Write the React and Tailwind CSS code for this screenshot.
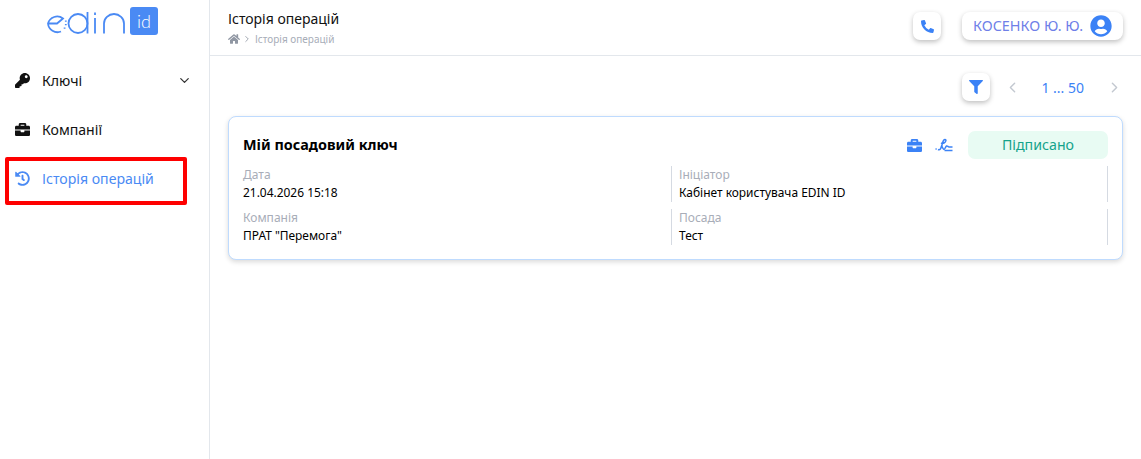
import { FaKey, FaBriefcase, FaHistory, FaHome, FaPhoneAlt, FaFilter, FaUserCircle } from 'react-icons/fa'
import { ChevronDown, ChevronLeft, ChevronRight } from 'lucide-react'

function Logo() {
  return (
    <div className="flex h-[35px] items-start pl-[46px] pt-[7px]">
      <svg width="80" height="24" viewBox="0 0 80 24" fill="none" stroke="#4a8af4" strokeWidth="1.800" className="mt-[4px]">
        <path d="M2 12.500 H11 L17 7.500 A9.500 9.500 0 0 0 2 12.500 A9.500 9.500 0 0 0 15 20.500" />
        <path d="M19.800 9.500v1.300M19.800 13v1.300M18.600 16.500v1.300" />
        <circle cx="32" cy="12.500" r="9.500" />
        <path d="M41.500 1v21.500" />
        <path d="M49 1.500v2.400M49 7v15.500" />
        <path d="M58 22.500V12.500a10 9.500 0 0 1 20 0V22.500" />
      </svg>
      <div className="ml-[4px] flex h-[28px] w-[28px] items-center justify-center rounded-[3px] bg-[#4a8af4] font-['Lato',sans-serif] text-[18px] font-light text-white">id</div>
    </div>
  )
}

function SignatureIcon() {
  return (
    <svg width="18" height="14" viewBox="0 0 18 14" fill="none" stroke="#3b82f6" strokeWidth="1.500" className="ml-[13px]">
      <path d="M0.500 11h1.200M3 11.500c2 1 3-1 4-4.500s1-5.500 3-5.500c1.600 0 1 2.500-1 3.500-1 .5-2 .5-3 0" />
      <path d="M6 7.500c1 .5 2 4 3 4s1.500-3 2.500-3.500 1.500 1 2.500 1h3.500" />
      <path d="M9.500 12.500h8" />
    </svg>
  )
}

function NavItem({ icon, label, active, chevron }) {
  return (
    <div className={`flex h-[49px] items-center pl-[15px] pr-[17px] text-[14.1px] ${active ? 'text-[#4a8af4]' : 'text-[#111]'}`}>
      <span className="flex w-[27px] text-[15px]">{icon}</span>
      <span className="flex-1">{label}</span>
      {chevron && <ChevronDown size={15} strokeWidth={2} className="text-[#333]" />}
    </div>
  )
}

function Field({ label, value, divider }) {
  return (
    <div className={`h-[36px] ${divider ? 'border-l border-r border-[#d5dae2] pl-[7px]' : ''}`}>
      <div className="text-[12px] leading-[17px] text-[#a8adb8]">{label}</div>
      <div className="text-[11.95px] leading-[19px] text-black">{value}</div>
    </div>
  )
}

export default function App() {
  return (
    <div className="flex h-[459px] w-[1141px] overflow-hidden bg-white font-['Noto_Sans',sans-serif]">
      <aside className="w-[210px] shrink-0 border-r border-[#e3e7ec]">
        <Logo />
        <nav className="mt-[21px]">
          <NavItem icon={<FaKey />} label="Ключі" chevron />
          <NavItem icon={<FaBriefcase />} label="Компанії" />
          <div className="relative">
            <NavItem icon={<FaHistory />} label="Історія операцій" active />
            <div className="absolute left-[5px] top-[3px] h-[48px] w-[182px] rounded-[2px] border-[4px] border-[#fe0000]" />
          </div>
        </nav>
      </aside>

      <main className="flex-1">
        <header className="flex h-[56px] items-center justify-between border-b border-[#e3e7ec] pl-[18px] pr-[18px]">
          <div className="-mt-[1px]">
            <div className="text-[14px] leading-[20px] text-[#111]">Історія операцій</div>
            <div className="mt-[4px] flex items-center text-[10px] leading-[13px] text-[#a8adb8]">
              <FaHome size={12} className="text-[#9097a3]" />
              <ChevronRight size={10} className="ml-[2px] mr-[3px] text-[#9097a3]" />
              <span>Історія операцій</span>
            </div>
          </div>
          <div className="mb-[3px] flex items-center gap-[21px]">
            <button className="flex h-[28px] w-[28px] items-center justify-center rounded-[7px] bg-white text-[#3b82f6] shadow-[0_2px_5px_rgba(0,0,0,0.25)]">
              <FaPhoneAlt size={13} />
            </button>
            <div className="flex h-[28px] w-[161px] items-center justify-between rounded-[8px] bg-white pl-[11px] pr-[11px] text-[14.4px] text-[#6f7fe8] shadow-[0_2px_5px_rgba(0,0,0,0.25)]">
              <span>КОСЕНКО Ю. Ю.</span>
              <FaUserCircle size={22} className="text-[#3b82f6]" />
            </div>
          </div>
        </header>

        <div className="pl-[18px] pr-[18px]">
          <div className="flex h-[60px] items-center justify-end pt-[2px]">
            <button className="mr-[14px] flex h-[28px] w-[28px] items-center justify-center rounded-[7px] bg-white text-[#3b82f6] shadow-[0_2px_5px_rgba(0,0,0,0.25)]">
              <FaFilter size={14} />
            </button>
            <ChevronLeft size={17} className="text-[#c3c8d0]" />
            <span className="ml-[20px] mr-[22px] text-[14px] text-[#3b82f6]">1 ... 50</span>
            <ChevronRight size={17} className="text-[#c3c8d0]" />
          </div>

          <section className="h-[144px] w-[895px] rounded-[8px] border border-[#bfdbfe] bg-white pl-[14px] pr-[14px] pt-[14px] shadow-[0_2px_5px_rgba(0,0,0,0.15)]">
            <div className="flex h-[28px] items-center justify-between">
              <h2 className="-mt-[1px] text-[14.4px] font-bold text-black">Мій посадовий ключ</h2>
              <div className="flex items-center">
                <FaBriefcase size={15} className="text-[#3b82f6]" />
                <SignatureIcon />
                <div className="ml-[15px] flex h-[28px] w-[140px] items-center justify-center rounded-[7px] bg-[#e8fbf3] text-[14.2px] text-[#14a38b]">Підписано</div>
              </div>
            </div>
            <div className="mt-[7px] grid grid-cols-[428px_437px] gap-y-[7px]">
              <Field label="Дата" value="21.04.2026 15:18" />
              <Field label="Ініціатор" value="Кабінет користувача EDIN ID" divider />
              <Field label="Компанія" value={'ПРАТ "Перемога"'} />
              <Field label="Посада" value="Тест" divider />
            </div>
          </section>
        </div>
      </main>
    </div>
  )
}
